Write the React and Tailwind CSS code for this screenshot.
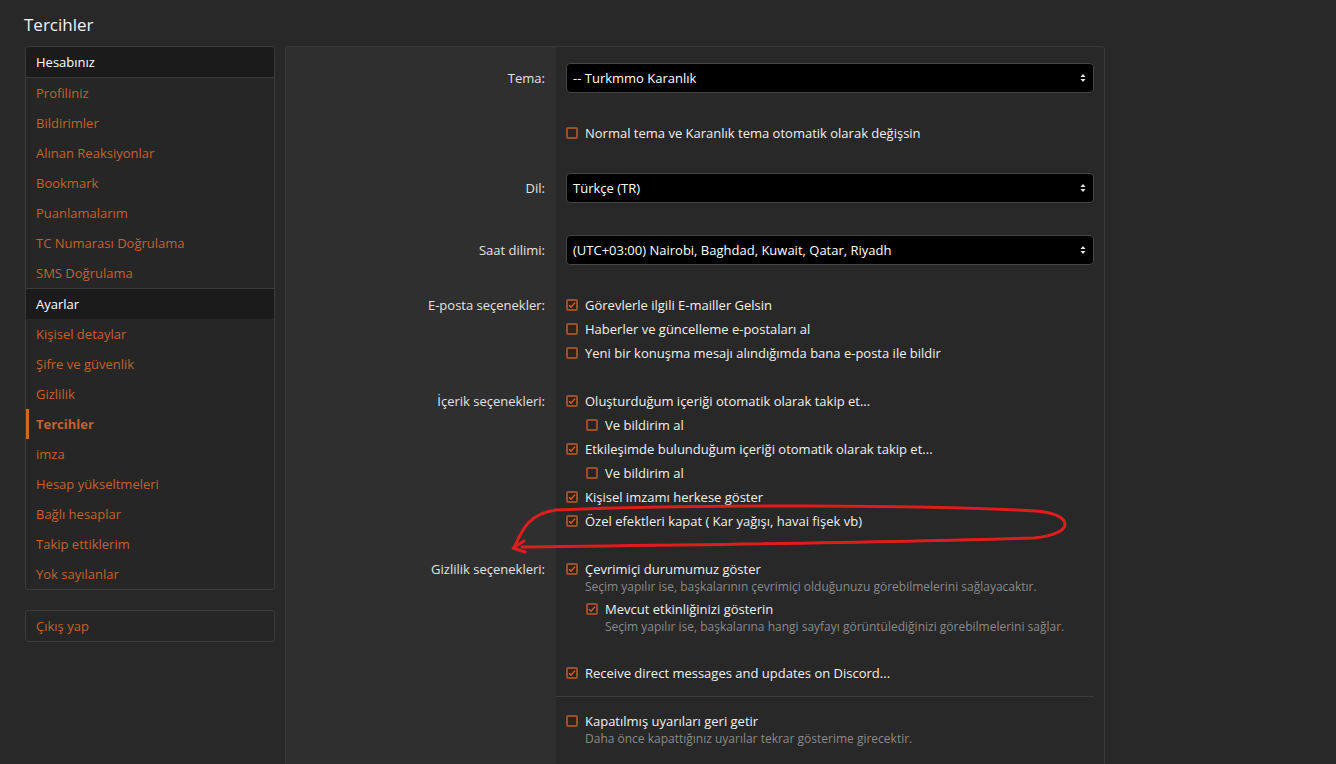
import React from 'react';

const accountLinks = [
  'Profiliniz',
  'Bildirimler',
  'Alınan Reaksiyonlar',
  'Bookmark',
  'Puanlamalarım',
  'TC Numarası Doğrulama',
  'SMS Doğrulama',
];

const settingsLinks = [
  'Kişisel detaylar',
  'Şifre ve güvenlik',
  'Gizlilik',
  'Tercihler',
  'imza',
  'Hesap yükseltmeleri',
  'Bağlı hesaplar',
  'Takip ettiklerim',
  'Yok sayılanlar',
];

const Checkbox = ({ checked }) => (
  <span className="w-[12px] h-[12px] shrink-0 rounded-[2px] border-2 border-[#9a4f2b] bg-[#2b231f] flex items-center justify-center">
    {checked && (
      <svg width="8" height="8" viewBox="0 0 8 8" fill="none">
        <path d="M1 4.2 L3.1 6.2 L7 1.6" stroke="#d0662e" strokeWidth="1.4" />
      </svg>
    )}
  </span>
);

const Option = ({ label, checked, desc, indent }) => (
  <div className={indent ? 'pl-[20px]' : ''}>
    <div className={`flex items-center gap-[7px] ${desc ? 'h-[20px]' : 'h-[24px]'}`}>
      <Checkbox checked={checked} />
      <span className="text-[#f0f0f0]">{label}</span>
    </div>
    {desc && <div className="pl-[19px] text-[12px] leading-[16px] text-[#8a8a8a]">{desc}</div>}
  </div>
);

const SelectBox = ({ value }) => (
  <div className="h-[30px] bg-black border border-[#454545] rounded-[4px] flex items-center justify-between pl-[6px] pr-[7px] text-white">
    <span>{value}</span>
    <svg width="6" height="10" viewBox="0 0 6 10">
      <path d="M3 1 L5.5 4 L0.5 4 Z M3 9 L5.5 6 L0.5 6 Z" fill="#e8e8e8" />
    </svg>
  </div>
);

const Row = ({ label, pt, pb = '', lineH = 'h-[24px]', children, contentClass = '' }) => (
  <>
    <div className={`bg-[#2f2f2f] pr-[11px] ${pt} ${pb}`}>
      {label && <div className={`${lineH} flex items-center justify-end text-[#e2e2e2]`}>{label}</div>}
    </div>
    <div className={`pl-[10px] pr-[10px] ${pt} ${pb} ${contentClass}`}>{children}</div>
  </>
);

export default function App() {
  return (
    <div className="relative min-h-screen bg-[#282828] text-[13px] leading-[20px] overflow-hidden" style={{ fontFamily: '"Open Sans", "Noto Sans", sans-serif' }}>
      <div className="px-[24px] pt-[14px]">
        <h1 className="text-[17px] leading-[22px] text-[#f2f2f2] mb-[10px]">Tercihler</h1>
        <div className="flex gap-[10px] items-start">
          <div className="w-[250px] ml-px shrink-0">
            <div className="border border-[#3b3b3b] rounded-[3px] bg-[#262626] overflow-hidden">
              <div className="h-[31px] flex items-center pl-[10px] bg-[#1b1b1b] text-white border-b border-[#3b3b3b]">Hesabınız</div>
              {accountLinks.map((l) => (
                <div key={l} className="h-[30px] flex items-center pl-[10px] text-[#c4622b]">{l}</div>
              ))}
              <div className="h-[31px] flex items-center pl-[10px] bg-[#1b1b1b] text-white border-t border-[#3b3b3b]">Ayarlar</div>
              {settingsLinks.map((l) =>
                l === 'Tercihler' ? (
                  <div key={l} className="h-[30px] flex items-center border-l-[3px] border-[#d2691e] pl-[7px] font-bold text-[#c4622b]">
                    {l}
                  </div>
                ) : (
                  <div key={l} className="h-[30px] flex items-center pl-[10px] text-[#c4622b]">
                    {l}
                  </div>
                )
              )}
            </div>
            <div className="mt-[20px] h-[32px] border border-[#3b3b3b] rounded-[3px] bg-[#262626] flex items-center pl-[10px] text-[#c4622b]">Çıkış yap</div>
          </div>

          <div className="w-[820px] shrink-0 border border-[#3a3a3a] rounded-[3px] bg-[#282828] grid grid-cols-[270px_1fr]">
            <Row label="Tema:" pt="pt-[16px]" lineH="h-[30px]">
              <SelectBox value="-- Turkmmo Karanlık" />
            </Row>
            <Row pt="pt-[28px]">
              <Option label="Normal tema ve Karanlık tema otomatik olarak değişsin" />
            </Row>
            <Row label="Dil:" pt="pt-[28px]" lineH="h-[30px]">
              <SelectBox value="Türkçe (TR)" />
            </Row>
            <Row label="Saat dilimi:" pt="pt-[32px]" lineH="h-[30px]">
              <SelectBox value="(UTC+03:00) Nairobi, Baghdad, Kuwait, Qatar, Riyadh" />
            </Row>
            <Row label="E-posta seçenekler:" pt="pt-[28px]">
              <Option checked label="Görevlerle ilgili E-mailler Gelsin" />
              <Option label="Haberler ve güncelleme e-postaları al" />
              <Option label="Yeni bir konuşma mesajı alındığımda bana e-posta ile bildir" />
            </Row>
            <Row label="İçerik seçenekleri:" pt="pt-[24px]">
              <Option checked label="Oluşturduğum içeriği otomatik olarak takip et..." />
              <Option indent label="Ve bildirim al" />
              <Option checked label="Etkileşimde bulunduğum içeriği otomatik olarak takip et..." />
              <Option indent label="Ve bildirim al" />
              <Option checked label="Kişisel imzamı herkese göster" />
              <Option checked label="Özel efektleri kapat ( Kar yağışı, havai fişek vb)" />
            </Row>
            <Row label="Gizlilik seçenekleri:" pt="pt-[26px]" lineH="h-[20px]">
              <Option
                checked
                label="Çevrimiçi durumumuz göster"
                desc="Seçim yapılır ise, başkalarının çevrimiçi olduğunuzu görebilmelerini sağlayacaktır."
              />
              <div className="mt-[4px]">
                <Option
                  indent
                  checked
                  label="Mevcut etkinliğinizi gösterin"
                  desc="Seçim yapılır ise, başkalarına hangi sayfayı görüntülediğinizi görebilmelerini sağlar."
                />
              </div>
            </Row>
            <Row pt="pt-[26px]" pb="pb-[11px]">
              <Option checked label="Receive direct messages and updates on Discord..." />
            </Row>
            <Row pt="pt-[14px]" pb="pb-[40px]" contentClass="border-t border-[#3d3d3d] mr-[10px]">
              <Option label="Kapatılmış uyarıları geri getir" desc="Daha önce kapattığınız uyarılar tekrar gösterime girecektir." />
            </Row>
          </div>
        </div>
      </div>

      <svg className="absolute inset-0 pointer-events-none" width="1336" height="764" viewBox="0 0 1336 764">
        <path
          d="M514 548 C522 530 528 514 556 510 C700 504 930 505 1036 511 C1074 514 1076 534 1034 538 C880 543 680 545 522 547"
          fill="none"
          stroke="#e11c1c"
          strokeWidth="3"
          strokeLinecap="round"
        />
        <path d="M524 541 L513 548 L525 552" fill="none" stroke="#e11c1c" strokeWidth="3" strokeLinecap="round" strokeLinejoin="round" />
      </svg>
    </div>
  );
}
